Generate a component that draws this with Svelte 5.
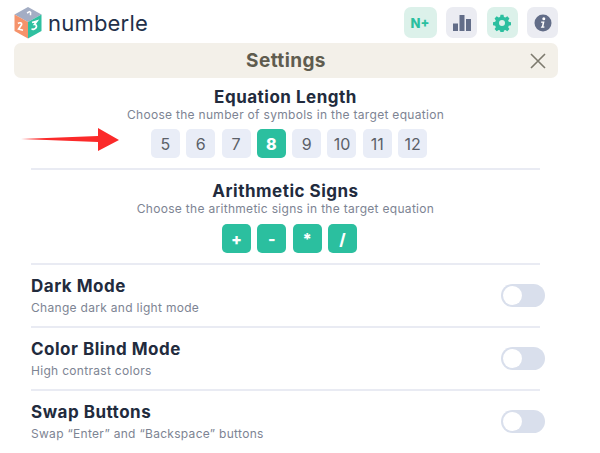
<script>
  const lengths = [5, 6, 7, 8, 9, 10, 11, 12];
  const signs = ['+', '-', '*', '/'];
  const rows = [
    { title: 'Dark Mode', desc: 'Change dark and light mode' },
    { title: 'Color Blind Mode', desc: 'High contrast colors' },
    { title: 'Swap Buttons', desc: 'Swap “Enter” and “Backspace” buttons' }
  ];
</script>

<div class="page">
  <header class="top">
    <div class="brand">
      <svg class="logo" viewBox="0 0 28 32" width="28" height="32">
        <polygon points="14,0 27.5,7.5 14,15 0.5,7.5" fill="#a3adc4" />
        <polygon points="0.5,7.5 14,15 14,31.5 0.5,24" fill="#f5936b" />
        <polygon points="27.5,7.5 14,15 14,31.5 27.5,24" fill="#2fc0a0" />
        <path d="M13 6l2.6-1.3 1 .6-.1 3" fill="none" stroke="#fff" stroke-width="1.5" />
        <path d="M4 16.5c2-1.5 4-.5 3.6 1.2L4.6 22l4.4 1.2" fill="none" stroke="#fff" stroke-width="1.7" />
        <path d="M18 15.5l5-1.5-2.5 3.4c2.600 0 3 4-1 5l-2-.2" fill="none" stroke="#fff" stroke-width="1.7" />
      </svg>
      <span class="name">numberle</span>
    </div>
    <div class="tools">
      <button class="tool green nplus">N+</button>
      <button class="tool grey" aria-label="Statistics">
        <svg viewBox="0 0 18 16" width="18" height="16"><path d="M0 8.500h5V16H0zM6.500 0h5v16h-5zM13 4h5v12h-5z" fill="#626d88" /></svg>
      </button>
      <button class="tool green" aria-label="Settings">
        <svg viewBox="0 0 24 24" width="18" height="18"><path fill-rule="evenodd" fill="#2bbf9f" d="M10 1h4l.6 3 1.900.8 2.600-1.700 2.800 2.800-1.700 2.600.8 1.900 3 .6v4l-3 .6-.8 1.900 1.700 2.600-2.800 2.800-2.600-1.700-1.900.8-.6 3h-4l-.6-3-1.900-.8-2.600 1.700-2.800-2.800 1.700-2.600-.8-1.900-3-.6v-4l3-.6.8-1.900-1.700-2.600 2.800-2.800 2.600 1.700 1.900-.8zM12 8a4 4 0 1 0 0 8 4 4 0 0 0 0-8z" /></svg>
      </button>
      <button class="tool grey" aria-label="Info">
        <svg viewBox="0 0 18 18" width="18" height="18"><circle cx="9" cy="9" r="8.500" fill="#626d88" /><circle cx="9.800" cy="4.800" r="1.500" fill="#fff" /><path d="M7.200 7.500h3.300L9.400 12.600h1.100l-.2 1.200H6.800l.3-1.200h.8l.7-3.900H7z" fill="#fff" /></svg>
      </button>
    </div>
  </header>

  <div class="bar">
    <h1>Settings</h1>
    <svg class="close" viewBox="0 0 16 16" width="16" height="16"><path d="M1 1l14 14M15 1L1 15" stroke="#7d7a6e" stroke-width="1.600" fill="none" /></svg>
  </div>

  <main class="content">
    <section class="block first">
      <h2>Equation Length</h2>
      <p>Choose the number of symbols in the target equation</p>
      <div class="keys">
        {#each lengths as n}
          <span class="key" class:on={n === 8}>{n}</span>
        {/each}
      </div>
    </section>
    <section class="block second">
      <h2>Arithmetic Signs</h2>
      <p>Choose the arithmetic signs in the target equation</p>
      <div class="keys">
        {#each signs as s}
          <span class="key on">{s}</span>
        {/each}
      </div>
    </section>
    {#each rows as r}
      <section class="row">
        <div>
          <h3>{r.title}</h3>
          <p>{r.desc}</p>
        </div>
        <span class="toggle"><span class="knob"></span></span>
      </section>
    {/each}
  </main>

  <svg class="arrow" viewBox="0 0 100 32" width="100" height="32">
    <polygon points="0,12 77,9 77,1 98,13 77,24 77,15" fill="#fb2a2a" />
  </svg>
</div>

<style>
  :global(body) {
    margin: 0;
    background: #fff;
  }
  .page {
    position: relative;
    width: 600px;
    height: 453px;
    overflow: hidden;
    box-sizing: border-box;
    padding: 7px 42px 0 14px;
    font-family: Inter, "Open Sans", sans-serif;
    color: #222b3d;
  }
  .top {
    display: flex;
    justify-content: space-between;
    height: 31px;
  }
  .brand {
    display: flex;
    align-items: center;
    gap: 6px;
  }
  .logo {
    display: block;
    margin-top: 1px;
  }
  .name {
    font-size: 22px;
    font-weight: 400;
    letter-spacing: 0.2px;
    color: #22304a;
  }
  .tools {
    display: flex;
    gap: 9.500px;
  }
  .tool {
    width: 31px;
    height: 31px;
    padding: 0;
    border: 0;
    border-radius: 7px;
    display: flex;
    align-items: center;
    justify-content: center;
    font-family: inherit;
  }
  .nplus {
    width: 33px;
    font-size: 13px;
    font-weight: 800;
    color: #2bbf9f;
  }
  .green {
    background: #dcf1ea;
  }
  .grey {
    background: #ebecf2;
  }
  .bar {
    position: relative;
    height: 35px;
    margin-top: 5px;
    border-radius: 7px;
    background: #f3f0e9;
    display: flex;
    align-items: center;
    justify-content: center;
  }
  h1 {
    margin: 0;
    font-size: 19px;
    letter-spacing: 0.4px;
    font-weight: 700;
    color: #5f5c4f;
  }
  .close {
    position: absolute;
    right: 12px;
    top: 10px;
  }
  .content {
    padding: 0 18px 0 17px;
  }
  .block {
    text-align: center;
    height: 92px;
    box-sizing: border-box;
    border-bottom: 2px solid #e9ebf3;
  }
  .first {
    padding-top: 9px;
  }
  .second {
    height: 95px;
    padding-top: 11px;
  }
  h2 {
    margin: 0;
    font-size: 17px;
    letter-spacing: 0.5px;
    line-height: 20px;
    font-weight: 700;
  }
  p {
    margin: 0;
    font-size: 12px;
    letter-spacing: 0.3px;
    line-height: 16px;
    color: #7d8493;
  }
  .keys {
    display: flex;
    justify-content: center;
    gap: 6.300px;
    margin: 6px 0 0 7px;
  }
  .second .keys {
    margin: 7px 0 0 8px;
  }
  .key {
    width: 29px;
    height: 29px;
    border-radius: 5px;
    background: #e9edf7;
    color: #5b6068;
    font-size: 16px;
    display: flex;
    align-items: center;
    justify-content: center;
  }
  .key.on {
    background: #2bbf9f;
    color: #fff;
    font-weight: 800;
  }
  .row {
    height: 63px;
    box-sizing: border-box;
    padding-top: 11px;
    display: flex;
    justify-content: space-between;
    border-bottom: 2px solid #e9ebf3;
  }
  .row:last-child {
    border-bottom: 0;
  }
  h3 {
    margin: 0 0 4px;
    font-size: 17px;
    letter-spacing: 0.5px;
    line-height: 20px;
    font-weight: 700;
  }
  .toggle {
    width: 44px;
    height: 23px;
    margin: 8px -5px 0 0;
    border-radius: 12px;
    background: #d9dfec;
    display: flex;
    align-items: center;
    padding-left: 2px;
    box-sizing: border-box;
  }
  .knob {
    width: 19px;
    height: 19px;
    border-radius: 50%;
    background: #fff;
  }
  .arrow {
    position: absolute;
    left: 21px;
    top: 127px;
  }
</style>
